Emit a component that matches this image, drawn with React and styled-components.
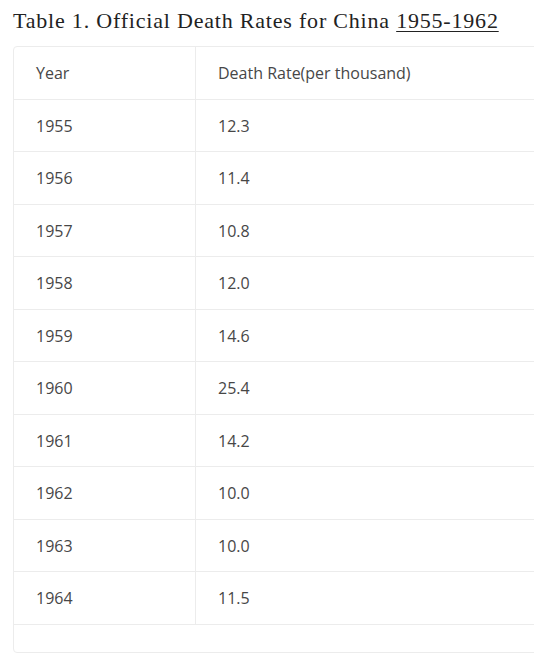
import React from 'react'
import styled, { createGlobalStyle } from 'styled-components'

const rows = [
    ['1955', '12.3'],
    ['1956', '11.4'],
    ['1957', '10.8'],
    ['1958', '12.0'],
    ['1959', '14.6'],
    ['1960', '25.4'],
    ['1961', '14.2'],
    ['1962', '10.0'],
    ['1963', '10.0'],
    ['1964', '11.5'],
]

const App = () => (
    <Page>
        <GlobalStyle />
        <Title>
            Table 1. Official Death Rates for China <Link>1955-1962</Link>
        </Title>
        <Wrap>
            <Table>
                <thead>
                    <tr>
                        <Cell as="th" $first>Year</Cell>
                        <Cell as="th">Death Rate(per thousand)</Cell>
                    </tr>
                </thead>
                <tbody>
                    {rows.map(([year, rate]) => (
                        <tr key={year}>
                            <Cell $first>{year}</Cell>
                            <Cell>{rate}</Cell>
                        </tr>
                    ))}
                </tbody>
            </Table>
            <Foot />
        </Wrap>
    </Page>
)

const GlobalStyle = createGlobalStyle`
    html, body {
        margin: 0;
        background: #fff;
        overflow: hidden;
    }
`

const Page = styled.div`
    width: 534px;
    height: 653px;
    overflow: hidden;
    padding: 7px 0 0 13px;
    box-sizing: border-box;
`

const Title = styled.h3`
    margin: 0 0 11px;
    font-family: "Liberation Serif", "DejaVu Serif", serif;
    font-weight: normal;
    font-size: 22px;
    letter-spacing: 0.8px;
    line-height: 28px;
    color: #222;
    white-space: nowrap;
`

const Link = styled.span`
    text-decoration: underline;
    text-underline-offset: 3px;
    text-decoration-thickness: 1px;
`

const Wrap = styled.div`
    width: 640px;
    border: 1px solid #ececec;
    border-radius: 4px;
    box-sizing: border-box;
`

const Table = styled.table`
    width: 100%;
    border-collapse: collapse;
    font-family: "Open Sans", "Liberation Sans", sans-serif;
    font-size: 16px;
    color: #474747;
`

const Cell = styled.td`
    text-align: left;
    font-weight: normal;
    padding: 15px 22px 14px;
    line-height: 22.5px;
    border-bottom: 1px solid #ececec;
    width: ${({ $first }) => ($first ? '137px' : 'auto')};
    border-right: ${({ $first }) => ($first ? '1px solid #ececec' : 'none')};
`

const Foot = styled.div`
    height: 27px;
`

export default App
